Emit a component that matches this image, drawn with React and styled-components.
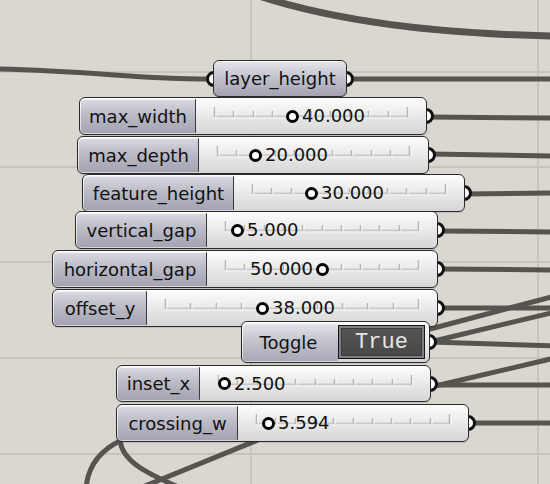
import React from 'react';
import styled, { createGlobalStyle } from 'styled-components';

const GlobalStyle = createGlobalStyle`
  html, body {
    margin: 0;
    padding: 0;
    background: #dad7d0;
  }
  body {
    font-family: "DejaVu Sans", "Noto Sans", sans-serif;
  }
`;

const Canvas = styled.div`
  position: relative;
  width: 550px;
  height: 484px;
  overflow: hidden;
  background: #dad7d0;
`;

const Wires = styled.svg`
  position: absolute;
  left: 0;
  top: 0;
`;

const NodeWrap = styled.div`
  position: absolute;
  left: ${(p) => p.$x}px;
  top: ${(p) => p.$y}px;
`;

const Grip = styled.span`
  position: absolute;
  top: 50%;
  ${(p) => (p.$side === 'left' ? 'left: -7px;' : 'right: -7px;')}
  width: 10px;
  height: 10px;
  margin-top: -8px;
  border: 3px solid #111;
  border-radius: 50%;
  background: #fff;
`;

const Body = styled.div`
  position: relative;
  display: flex;
  box-sizing: border-box;
  width: ${(p) => p.$w}px;
  height: ${(p) => p.$h}px;
  padding: 1px;
  border: 1px solid #2b2b2b;
  border-radius: 6px;
  background: linear-gradient(#fdfdfd, #e9e9e9 50%, #d6d6d6);
  box-shadow: 0 1px 1px rgba(0, 0, 0, 0.12);
`;

const Label = styled.div`
  flex: none;
  display: flex;
  align-items: center;
  justify-content: center;
  box-sizing: border-box;
  width: ${(p) => p.$w}px;
  border-radius: 4px 1px 1px 4px;
  border-right: 1px solid #3a3a3a;
  background: linear-gradient(#d9d9e1, #bcbcc7 45%, #a3a3b2);
  box-shadow: inset 0 1px 0 rgba(255, 255, 255, 0.7);
  font-size: 18px;
  color: #111;
  white-space: nowrap;
`;

const Slider = styled.div`
  position: relative;
  flex: 1;
`;

const Track = styled.svg`
  position: absolute;
  left: 18px;
  top: 50%;
  margin-top: -10px;
  overflow: visible;
`;

const Readout = styled.div`
  position: absolute;
  top: 50%;
  width: 0;
  height: 0;
`;

const Knob = styled.span`
  position: absolute;
  left: -6.5px;
  top: -6.5px;
  width: 7px;
  height: 7px;
  border: 3px solid #050505;
  border-radius: 50%;
  background: #fff;
`;

const Value = styled.span`
  position: absolute;
  top: -11px;
  ${(p) => (p.$flip ? 'right: 9px;' : 'left: 10px;')}
  font-size: 18px;
  line-height: 22px;
  color: #111;
  white-space: nowrap;
`;

const ParamBody = styled(Body)`
  justify-content: center;
  align-items: center;
  background: linear-gradient(#e6e6ec, #c4c4ce 45%, #a3a3b1);
  box-shadow: inset 0 1px 0 rgba(255, 255, 255, 0.8), 0 1px 1px rgba(0, 0, 0, 0.12);
  font-size: 18px;
  color: #111;
`;

const ToggleLabel = styled(Label)`
  border-right: none;
  padding-right: 4px;
  background: linear-gradient(#e4e4ea, #c2c2cc 50%, #a8a8b6);
`;

const ToggleButton = styled.div`
  flex: 1;
  display: flex;
  align-items: center;
  justify-content: center;
  margin: 2px 3px 2px 0;
  border: 1px solid #151515;
  background: linear-gradient(#565656, #474747);
  box-shadow: inset 0 0 0 2px #808080, inset 0 0 0 3px #3a3a3a;
  font-family: "Liberation Mono", "DejaVu Sans Mono", monospace;
  font-size: 22px;
  color: #e6e6e6;
`;

const sliders = [
  { name: 'max_width', x: 79, y: 97, label: 117, width: 231, knob: 96, value: '40.000' },
  { name: 'max_depth', x: 77, y: 136, label: 122, width: 230, knob: 56, value: '20.000' },
  { name: 'feature_height', x: 82, y: 174, label: 152, width: 231, knob: 77, value: '30.000' },
  { name: 'vertical_gap', x: 75, y: 211, label: 132, width: 231, knob: 30, value: '5.000' },
  { name: 'horizontal_gap', x: 52, y: 250, label: 155, width: 231, knob: 115, value: '50.000', flip: true },
  { name: 'offset_y', x: 52, y: 289, label: 95, width: 291, knob: 115, value: '38.000' },
];

const lowerSliders = [
  { name: 'inset_x', x: 116, y: 365, label: 84, width: 231, knob: 24, value: '2.500', h: 37 },
  { name: 'crossing_w', x: 116, y: 404, label: 122, width: 231, knob: 30, value: '5.594' },
];

function SliderTrack({ length }) {
  const ticks = Array.from({ length: 11 }, (_, i) => Math.round((i * length) / 10) + 0.5);
  return (
    <Track width={length} height={14}>
      <line x1={0} y1={10.5} x2={length} y2={10.5} stroke="#c9c9c9" strokeWidth={2} />
      <line x1={0} y1={12} x2={length} y2={12} stroke="#f6f6f6" strokeWidth={1} />
      {ticks.map((t, i) => {
        const end = i === 0 || i === 10;
        return (
          <g key={i}>
            <line x1={t} y1={end ? 1 : 5} x2={t} y2={11} stroke="#b7b7b7" strokeWidth={1.6} />
            <line x1={t + 1.5} y1={end ? 1 : 5} x2={t + 1.5} y2={11} stroke="#f8f8f8" strokeWidth={1} />
          </g>
        );
      })}
    </Track>
  );
}

function NumberSlider({ name, x, y, label, width, knob, value, flip, h = 38 }) {
  return (
    <NodeWrap $x={x} $y={y}>
      <Grip $side="right" />
      <Body $w={label + width} $h={h}>
        <Label $w={label - 2}>{name}</Label>
        <Slider>
          <SliderTrack length={width - 38} />
          <Readout style={{ left: knob }}>
            <Knob />
            <Value $flip={flip}>{value}</Value>
          </Readout>
        </Slider>
      </Body>
    </NodeWrap>
  );
}

const WIRE = '#56544f';

function CanvasWires() {
  return (
    <Wires width={550} height={484}>
      <g stroke="#c7c4bd" strokeWidth={2}>
        <line x1={251} y1={0} x2={251} y2={484} />
        <line x1={538} y1={0} x2={538} y2={484} />
        {[72, 167, 262, 358, 454].map((gy) => (
          <line key={gy} x1={0} y1={gy} x2={550} y2={gy} />
        ))}
      </g>
      <g stroke={WIRE} fill="none" strokeWidth={5}>
        <path d="M 262 -3 C 340 22, 440 34, 555 36" strokeWidth={7} />
        <path d="M -3 69 C 90 71, 140 79, 208 79" />
        <path d="M 348 79 L 555 79" />
        <path d="M 428 117 L 555 118" />
        <path d="M 430 154 L 555 156" />
        <path d="M 466 194 L 555 193" />
        <path d="M 439 231 L 555 232" />
        <path d="M 439 269 L 555 270" />
        <path d="M 439 308 L 555 308" />
        <path d="M 400 337 L 555 296" />
        <path d="M 430 342 L 555 312" />
        <path d="M 430 342 L 555 346" />
        <path d="M 431 387 L 555 358" />
        <path d="M 431 385 L 555 385" />
        <path d="M 470 423 L 555 423" />
        <path d="M 122 440 C 100 450, 88 466, 86 488" />
        <path d="M 120 440 C 122 462, 148 474, 185 490" />
        <path d="M 258 440 L 140 488" />
      </g>
    </Wires>
  );
}

export default function App() {
  return (
    <>
      <GlobalStyle />
      <Canvas>
        <CanvasWires />
        <NodeWrap $x={213} $y={60}>
          <Grip $side="left" />
          <Grip $side="right" />
          <ParamBody $w={134} $h={37}>layer_height</ParamBody>
        </NodeWrap>
        {sliders.map((s) => (
          <NumberSlider key={s.name} {...s} />
        ))}
        <NodeWrap $x={241} $y={321}>
          <Grip $side="right" />
          <Body $w={189} $h={42}>
            <ToggleLabel $w={95}>Toggle</ToggleLabel>
            <ToggleButton>True</ToggleButton>
          </Body>
        </NodeWrap>
        {lowerSliders.map((s) => (
          <NumberSlider key={s.name} {...s} />
        ))}
      </Canvas>
    </>
  );
}
